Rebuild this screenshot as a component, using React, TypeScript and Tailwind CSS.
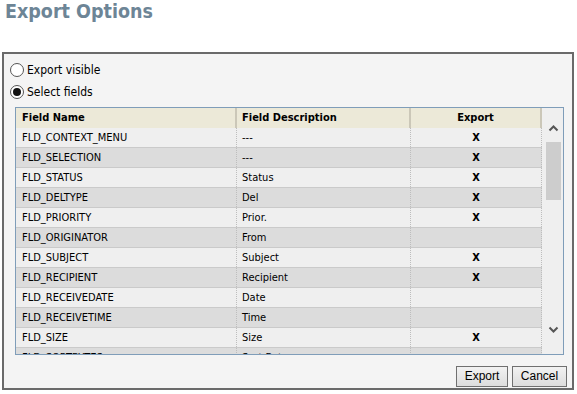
import React from 'react';

interface Field {
  name: string;
  desc: string;
  exp: boolean;
}

const fields: Field[] = [
  { name: 'FLD_CONTEXT_MENU', desc: '---', exp: true },
  { name: 'FLD_SELECTION', desc: '---', exp: true },
  { name: 'FLD_STATUS', desc: 'Status', exp: true },
  { name: 'FLD_DELTYPE', desc: 'Del', exp: true },
  { name: 'FLD_PRIORITY', desc: 'Prior.', exp: true },
  { name: 'FLD_ORIGINATOR', desc: 'From', exp: false },
  { name: 'FLD_SUBJECT', desc: 'Subject', exp: true },
  { name: 'FLD_RECIPIENT', desc: 'Recipient', exp: true },
  { name: 'FLD_RECEIVEDATE', desc: 'Date', exp: false },
  { name: 'FLD_RECEIVETIME', desc: 'Time', exp: false },
  { name: 'FLD_SIZE', desc: 'Size', exp: true },
  { name: 'FLD_SORTBYTES', desc: 'Sort Bytes', exp: false },
];

const Radio: React.FC<{ checked?: boolean; label: string }> = ({ checked, label }) => (
  <label className="flex h-[15px] items-center gap-[3px]">
    <span className="flex h-[14px] w-[14px] items-center justify-center rounded-full border border-[#555] bg-white">
      {checked && <span className="h-[8px] w-[8px] rounded-full bg-[#111]" />}
    </span>
    <span>{label}</span>
  </label>
);

const App: React.FC = () => {
  return (
    <div className="h-[394px] w-[577px] bg-white font-['DejaVu_Sans_Condensed','DejaVu_Sans',sans-serif] text-[11px] text-black">
      <h1 className="h-[52px] pl-[5px] pt-[1px] text-[19.5px] font-bold leading-[22px] text-[#6d8596]">Export Options</h1>
      <div className="ml-[2px] flex h-[338px] w-[572px] flex-col border-2 border-[#6a6a6a] bg-[#f4f4f4]">
        <div className="flex flex-col gap-[7px] pl-[6px] pt-[8px] text-[12px]">
          <Radio label="Export visible" />
          <Radio checked label="Select fields" />
        </div>
        <div className="ml-[11px] mt-[8px] flex h-[248px] w-[549px] border border-[#7f9db9] bg-[#efefef]">
          <div className="w-[527px] overflow-hidden">
            <div className="flex h-[20px] bg-[#ece9d8] font-bold leading-[19px]">
              <div className="w-[221px] border-r-2 border-[#cbc7b8] pl-[6px]">Field Name</div>
              <div className="w-[174px] border-r-2 border-[#cbc7b8] pl-[5px]">Field Description</div>
              <div className="w-[131px] border-r-2 border-[#cbc7b8] text-center">Export</div>
            </div>
            {fields.map((f, i) => (
              <div
                key={f.name}
                className={`flex h-[20px] shrink-0 border-b border-[#cacaca] leading-[19px] ${i % 2 === 0 ? 'bg-[#efefef]' : 'bg-[#dcdcdc]'}`}
              >
                <div className="w-[221px] border-r border-dotted border-[#bdbdbd] pl-[6px]">{f.name}</div>
                <div className="w-[174px] border-r border-dotted border-[#bdbdbd] pl-[5px]">{f.desc}</div>
                <div className="w-[131px] border-r border-dotted border-[#bdbdbd] text-center font-bold">{f.exp ? 'X' : ''}</div>
              </div>
            ))}
          </div>
          <div className="flex w-[21px] flex-col items-center bg-[#efefef] pt-[16px]">
            <svg width="11" height="8" viewBox="0 0 11 8" className="ml-[2px]">
              <path d="M1.5 6.5 L5.5 2.5 L9.5 6.5" fill="none" stroke="#555" strokeWidth="2" />
            </svg>
            <div className="ml-[2px] mt-[10px] h-[58px] w-[15px] bg-[#cdcdcd]" />
            <svg width="11" height="8" viewBox="0 0 11 8" className="ml-[2px] mt-[126px]">
              <path d="M1.5 1.5 L5.5 5.5 L9.5 1.5" fill="none" stroke="#555" strokeWidth="2" />
            </svg>
          </div>
        </div>
        <div className="mt-auto flex justify-end gap-[4px] pb-[1px] pr-[5px] font-['Liberation_Sans',sans-serif] text-[12px]">
          <button className="h-[21px] w-[52px] border border-[#707070] bg-gradient-to-b from-[#f2f2f2] to-[#dddddd] leading-[19px]">Export</button>
          <button className="h-[21px] w-[55px] border border-[#707070] bg-gradient-to-b from-[#f2f2f2] to-[#dddddd] leading-[19px]">Cancel</button>
        </div>
      </div>
    </div>
  );
};

export default App;
